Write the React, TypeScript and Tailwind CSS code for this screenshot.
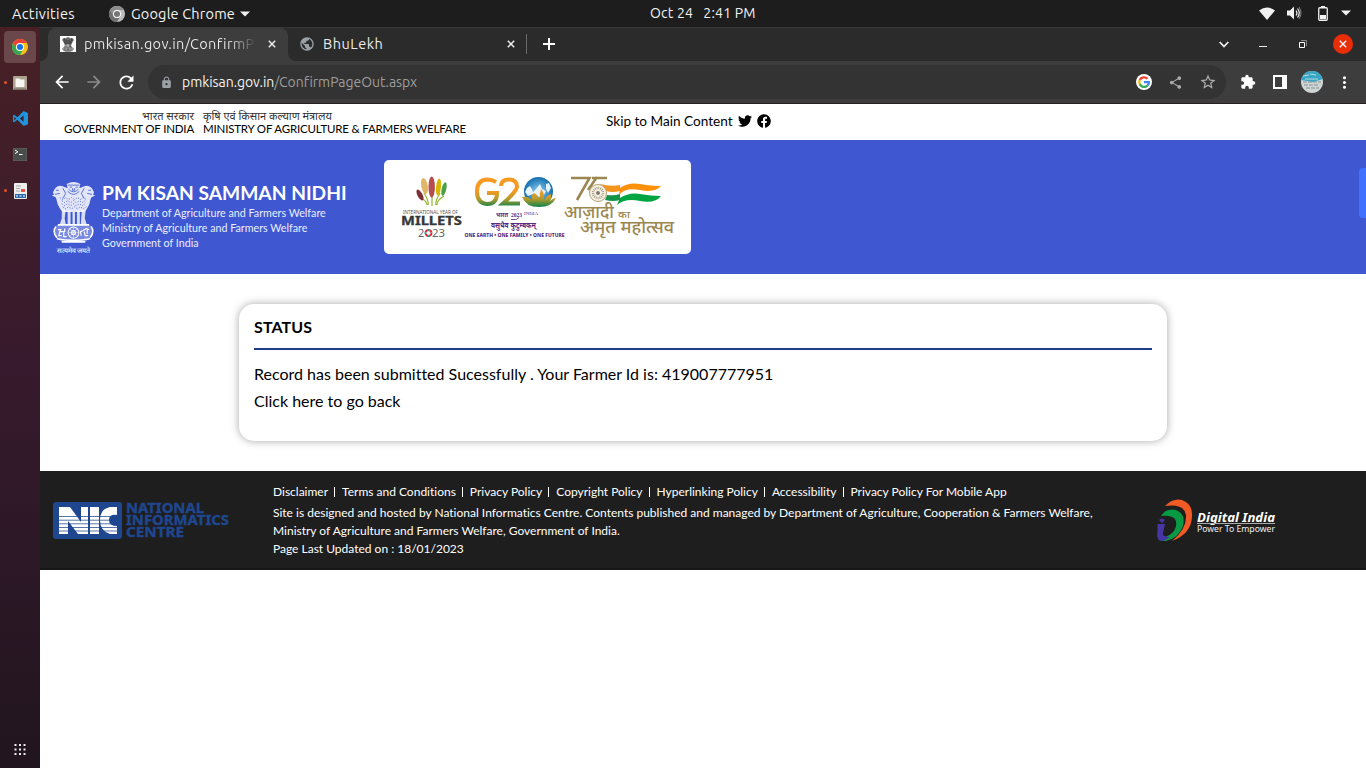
import React from 'react';
import { FaTwitter, FaFacebook } from 'react-icons/fa';
import { MdArrowBack, MdArrowForward, MdRefresh, MdLock, MdShare, MdStarBorder, MdExtension, MdMoreVert, MdPublic } from 'react-icons/md';

function ChromeLogo({ size, gray = false }: { size: number; gray?: boolean }) {
  const c = gray ? ['#8d8d8d', '#bdbdbd', '#6f6f6f', '#777'] : ['#ea4335', '#fbc116', '#34a853', '#1a73e8'];
  return (
    <svg width={size} height={size} viewBox="0 0 48 48" className="shrink-0">
      <circle cx="24" cy="24" r="24" fill={c[1]} />
      <path d="M24 12H44.8A24 24 0 0 0 3.2 12L13.6 30A12 12 0 0 1 24 12Z" fill={c[0]} />
      <path d="M3.2 12A24 24 0 0 0 24 48L34.4 30A12 12 0 0 1 13.6 30Z" fill={c[2]} />
      <circle cx="24" cy="24" r="12" fill="#fff" />
      <circle cx="24" cy="24" r="9.2" fill={c[3]} />
    </svg>
  );
}

function Emblem({ className, color, detail }: { className: string; color: string; detail: string }) {
  return (
    <svg className={className} viewBox="0 0 44 62" preserveAspectRatio="none">
      <g fill={color}>
        <path d="M15 3Q22-1 29 3L28 7 33 5Q40 3 43 11L42 13 44 14 40 16 38 23 35 28 32 30H12L9 28 6 23 4 16 0 14 2 13 1 11Q4 3 11 5L16 7Z" opacity=".85" />
        <path d="M10 28h4l-1 8 1 6H8l2-6zM16 29h3v13h-3zM21 30h2.500v12h-2.500zM25.500 29h3v13h-3zM30.500 28h4l-1 8 2 6h-6z" opacity=".8" />
        <path d="M7 42H37Q42 44 42 49T38 56L34 59H10L6 56Q2 54 2 49T7 42Z" opacity=".3" />
      </g>
      <g fill="none" stroke={detail} strokeWidth=".8">
        <path d="M16 4h12M18 6h2.500M24 6h2.500M21 7v2h2V7M16 10Q22 16 28 10M17 8Q22 13 27 8M4 9h3M37 9h3M3 13l5-1M41 13l-5-1M11 7l3 5-3 5M33 7l-3 5 3 5" />
        <path d="M8 16l3 2 3-2 3 2 3-2 3 2 3-2 3 2 3-2 3 2M10 19l3 2 3-2 3 2 3-2 3 2 3-2 3 2 3-2M10 22l3 2 3-2 3 2 3-2 3 2 3-2 3 2 3-2M11 25l3 2 3-2 3 2 3-2 3 2 3-2 3 2 3-2" strokeDasharray="1.200 1.600" />
      </g>
      <g fill="none" stroke={color} strokeWidth="1">
        <path d="M6 42.500H38M5 56Q22 59 39 56M10 59H34M4 44q-4 5 1 11M40 44q4 5-1 11" strokeWidth="1.600" />
        <circle cx="22" cy="50" r="5.500" /><circle cx="22" cy="50" r="2" />
        <path d="M22 45v10M17 50h10M18.500 46.500l7 7M25.500 46.500l-7 7" strokeWidth=".5" />
        <path d="M6 47h3l-1 2h5v-3M8 49l-1 4h3M12 50v4h3M38 47l-3-1-3 2-3 1 1 4M33 49l1 4h3M36 47v4" strokeWidth="1.200" />
      </g>
    </svg>
  );
}

function TopBar() {
  return (
    <header className="flex h-[27px] shrink-0 items-center bg-[#1d1d1d] text-[14.5px] text-[#f2f2f2]">
      <span className="w-[109px] pl-3 tracking-[0.35px]">Activities</span>
      <ChromeLogo size={16} gray />
      <span className="ml-[6px] w-[109px] whitespace-nowrap tracking-[0.18px]">Google Chrome</span>
      <svg width="10" height="6" viewBox="0 0 10 6"><path d="M0 .5h10L5 5.5z" fill="#f2f2f2" /></svg>
      <span className="mb-px ml-[400px] whitespace-pre text-[14px] tracking-[0.2px]">Oct 24   2:41 PM</span>
      <div className="mb-px ml-auto flex items-center pr-[15px]">
        <svg width="16" height="13" viewBox="0 0 16 13"><path d="M0 3.5Q8-2.5 16 3.5L8 13Z" fill="#f2f2f2" /></svg>
        <svg className="ml-[12px]" width="16" height="14" viewBox="0 0 16 14"><path d="M0 4.500h3L7 .5v13L3 9.500H0z" fill="#f2f2f2" /><path d="M9 4.500q2 2.500 0 5M10.500 2.500q3.500 4.500 0 9" fill="none" stroke="#f2f2f2" strokeWidth="1.200" /><path d="M12 1q4 6 0 12" fill="none" stroke="#888" /></svg>
        <svg className="ml-[15px]" width="10" height="15" viewBox="0 0 10 15"><path d="M3 0h4v2H3z" fill="#f2f2f2" /><rect x=".75" y="1.750" width="8.500" height="12.500" rx="1" fill="none" stroke="#f2f2f2" strokeWidth="1.300" /><path d="M2 9h6v4H2z" fill="#f2f2f2" /></svg>
        <svg className="ml-[13px]" width="10" height="6" viewBox="0 0 10 6"><path d="M0 .5h10L5 5.500z" fill="#f2f2f2" /></svg>
      </div>
    </header>
  );
}

function Dock() {
  const items: { dot: boolean; icon: React.ReactNode }[] = [
    { dot: true, icon: <ChromeLogo size={16} /> },
    { dot: true, icon: <svg width="14" height="14" viewBox="0 0 14 14"><rect width="14" height="14" rx="1" fill="#aaa18f" /><rect x="1" y="12.500" width="12" height="1.500" fill="#7c7567" /><path d="M2.500 2.500h4l1 1h4V10q0 1-1 1h-7q-1 0-1-1Z" fill="#f7f5f1" /></svg> },
    { dot: false, icon: <svg width="15" height="15" viewBox="0 0 24 24"><path d="M17 0l7 3v18l-7 3L7 14l-5 4-2-1V7l2-1 5 4zM17 7l-6 5 6 5zM2 9v6l3-3z" fill="#1f93dc" fillRule="evenodd" /></svg> },
    { dot: false, icon: <svg width="14" height="13" viewBox="0 0 14 13"><rect width="14" height="13" rx="1" fill="#4a4c4c" stroke="#777" strokeWidth=".6" /><path d="M2 2l3 1.800L2 5.600M6 6.500h3.500" fill="none" stroke="#fff" /></svg> },
    { dot: true, icon: <svg width="13" height="16" viewBox="0 0 13 16"><rect width="13" height="16" rx="1" fill="#efeeec" /><path d="M2 3h5M2 5.500h4M2 8h4" stroke="#aaa" strokeWidth="1" /><rect x="7" y="6" width="4" height="3" fill="#e05545" /><rect x="1" y="11" width="11" height="4" fill="#2668a8" /><path d="M2 13h2M5.500 13h2M9 13h2" stroke="#b8d6f2" strokeWidth="1.500" /></svg> },
  ];
  return (
    <aside className="flex w-10 shrink-0 flex-col bg-gradient-to-b from-[#482025] via-[#371a2d] via-45% to-[#21151f] pt-[2px]">
      {items.map((it, i) => (
        <div key={i} className="flex h-9 items-center pb-px">
          <span className="ml-1 flex w-[2px]">{it.dot && <i className="h-[3px] w-[3px] shrink-0 rounded-full bg-[#e9541f]" />}</span>
          <span className={i === 0 ? '-ml-[2px] flex h-8 w-8 items-center justify-center rounded-[4px] bg-[#69474b]' : '-ml-[2px] flex h-8 w-8 items-center justify-center'}>{it.icon}</span>
        </div>
      ))}
      <svg className="mt-auto mb-[13px] ml-[14px]" width="12" height="11" viewBox="0 0 12 11" fill="#ededed">
        {[0, 4.5, 9].map(y => [0, 4.5, 9].map(x => <rect key={`${x}-${y}`} x={x + 0.5} y={y} width="2" height="2" />))}
      </svg>
    </aside>
  );
}

function Close({ className = '' }: { className?: string }) {
  return <svg className={className} width="8" height="8" viewBox="0 0 8 8"><path d="M.8.800l6.400 6.400M7.200.800L.800 7.200" stroke="#eee" strokeWidth="1.500" /></svg>;
}

function Browser() {
  return (
    <div className="shrink-0 border-b border-[#262026] bg-[#3d3d3d] [font-variant-ligatures:none]">
      <div className="flex h-[34px] border-t border-[#383838] bg-[#2b2b2b] text-[14.5px] text-[#eaeaea]">
        <div className="w-2 bg-[#3d3d3d]"><div className="h-full rounded-br-lg bg-[#2b2b2b]" /></div>
        <div className="flex w-[240px] items-center rounded-t-lg bg-[#3d3d3d] pb-px pl-3">
          <span className="flex h-4 w-4 items-center justify-center bg-white"><Emblem className="h-[15px] w-3" color="#222" detail="#ddd" /></span>
          <span className="ml-2 w-[172px] overflow-hidden bg-gradient-to-r from-[#eaeaea] from-84% to-transparent bg-clip-text whitespace-nowrap text-transparent tracking-[0.32px]">pmkisan.gov.in/ConfirmP</span>
          <Close className="ml-3" />
        </div>
        <div className="w-[238px] bg-[#3d3d3d]">
          <div className="flex h-full items-center rounded-bl-lg bg-[#2b2b2b] pb-px pl-[11px]">
            <MdPublic className="text-[#9aa0a6]" size={16} />
            <span className="ml-2 w-[184px] tracking-[0.5px]">BhuLekh</span>
            <Close />
          </div>
        </div>
        <div className="mt-[6px] h-5 w-px bg-[#6a6a6a]" />
        <svg className="mt-[10px] ml-4" width="12" height="12" viewBox="0 0 12 12"><path d="M6 0v12M0 6h12" stroke="#fff" strokeWidth="2" /></svg>
        <div className="ml-auto flex items-center pr-[13px] pb-px">
          <svg width="10" height="7" viewBox="0 0 10 7"><path d="M.7 1L5 5.500 9.300 1" fill="none" stroke="#eee" strokeWidth="1.800" /></svg>
          <svg className="mt-[4px] ml-[30px]" width="8" height="2" viewBox="0 0 8 2"><path d="M0 1.500h8" stroke="#eee" /></svg>
          <svg className="ml-8" width="8" height="8" viewBox="0 0 8 8" fill="none"><path d="M2 .5h5.500V6" stroke="#888" /><path d="M.5 2.500h5v5h-5z" stroke="#fff" /></svg>
          <span className="ml-[26px] flex h-5 w-5 items-center justify-center rounded-full bg-[#e92d07]"><Close /></span>
        </div>
      </div>
      <div className="flex h-[42px] items-center pl-3 text-white">
        <MdArrowBack size={20} className="text-white" />
        <MdArrowForward size={20} className="ml-3 text-[#8b8b8b]" />
        <MdRefresh size={21} className="ml-[12px]" />
        <div className="ml-[11px] flex h-[34px] w-[1078px] items-center rounded-full bg-[#333] pl-[12px]">
          <MdLock size={13} className="text-[#9aa0a6]" />
          <span className="ml-[9px] text-[14px] tracking-[-0.05px] text-[#9d9d9d]"><span className="text-[#f2f2f2]">pmkisan.gov.in</span>/ConfirmPageOut.aspx</span>
          <span className="ml-auto flex h-4 w-4 items-center justify-center rounded-full bg-white">
            <svg width="12" height="12" viewBox="0 0 24 24" fill="none" strokeWidth="4.500"><path d="M19 5.500A9.500 9.500 0 0 0 3.500 8" stroke="#ea4335" /><path d="M3.500 8a9.500 9.500 0 0 0 0 8" stroke="#fbbc05" /><path d="M3.500 16A9.500 9.500 0 0 0 19 19" stroke="#34a853" /><path d="M19 19q3-3 3-7H12" stroke="#4285f4" /></svg>
          </span>
          <MdShare size={15} className="ml-4 text-[#aaa]" />
          <MdStarBorder size={18} className="mr-[9px] ml-[16px] text-[#b0b0b0]" />
        </div>
        <MdExtension size={16} className="ml-[14px]" />
        <svg className="ml-[17px]" width="14" height="14" viewBox="0 0 14 14"><path d="M0 0h14v14H0zM2 2v10h7V2z" fill="#fff" fillRule="evenodd" /></svg>
        <svg className="ml-[14px] rounded-full" width="22" height="22" viewBox="0 0 22 22"><path fill="#cfd4d4" d="M0 0h22v22H0z" /><path d="M0 0h22v8l-10 3-12-2z" fill="#35a6c6" /><path d="M2 5l6-1M9 3l6 1M4 8h13" stroke="#b8d9df" /><path d="M2 11h18M3 14h15M5 17h13" stroke="#879396" strokeWidth="1" strokeDasharray="4 1" /></svg>
        <MdMoreVert size={19} className="ml-[12px]" />
      </div>
    </div>
  );
}

function Millets() {
  return (
    <svg className="ml-4 overflow-visible" width="63" height="66" viewBox="0 0 63 66">
      <g fill="none" strokeWidth="1.200" stroke="#8fb92c"><path d="M24 18Q29 26 28 30M32 15V31M40 18Q35 26 36 30M21 23q6 3 6 7M44 21q-7 4-7 9" /></g>
      <ellipse cx="24.500" cy="11" rx="3.300" ry="8" transform="rotate(-10 24.500 11)" fill="#dfb767" /><ellipse cx="31.700" cy="12" rx="3.200" ry="10.500" fill="#b54f4d" /><ellipse cx="38.500" cy="12" rx="2.500" ry="8.500" transform="rotate(6 38.500 12)" fill="#d6b800" /><ellipse cx="44" cy="14" rx="2.300" ry="7" transform="rotate(13 44 14)" fill="#4c9f45" /><ellipse cx="20" cy="20" rx="2.500" ry="6" transform="rotate(-28 20 20)" fill="#7d3036" />
      <text x="3" y="39" fontFamily="Noto Sans" fontSize="5.500" fill="#555" textLength="55" lengthAdjust="spacingAndGlyphs">INTERNATIONAL YEAR OF</text>
      <text x="1" y="50" fontFamily="Noto Sans" fontWeight="700" fontSize="12" fill="#363738" stroke="#363738" strokeWidth=".3" textLength="61" lengthAdjust="spacingAndGlyphs">MILLETS</text>
      <text x="18" y="62" fontFamily="Noto Sans" fontSize="11" fill="#666">2</text>
      <circle cx="28.500" cy="58" r="3" fill="none" stroke="#e5243b" strokeWidth="2" strokeDasharray="3 2" /><circle cx="28.500" cy="58" r="3" fill="none" stroke="#26967d" strokeWidth="2" strokeDasharray="2 3" strokeDashoffset="-3" />
      <text x="32" y="62" fontFamily="Noto Sans" fontSize="11" fill="#666" textLength="13" lengthAdjust="spacingAndGlyphs">23</text>
    </svg>
  );
}

function G20() {
  return (
    <svg className="ml-px overflow-visible" width="102" height="66" viewBox="0 0 102 66">
      <defs><linearGradient id="g" gradientUnits="userSpaceOnUse" x1="0" y1="3" x2="0" y2="32"><stop offset=".45" stopColor="#f79a22" /><stop offset=".72" stopColor="#b69b2d" /><stop offset="1" stopColor="#09844a" /></linearGradient><radialGradient id="b"><stop stopColor="#8fd0f7" /><stop offset="1" stopColor="#136fae" /></radialGradient></defs>
      <g fill="none" stroke="url(#g)" strokeWidth="4"><path d="M32 7Q28 4.500 23 4.500Q13 5 13 16.500T23 29Q33 29 33 18H23" /><path d="M37 11Q37 4.500 45 4.500T53 12Q52 17 39 28.500H56" /></g>
      <circle cx="74.500" cy="16.500" r="14.500" fill="url(#b)" />
      <path d="M63 13l3-2 2 3 1 3 3-3 4-5 2 5 4 2-2 4-5 2-6-3-5 2-3-4zM82 9l3-1 2 5-3 5-2-4z" fill="#e6f2f8" />
      <path d="M58 22q7-1 10 4-1-6 2-8 4 2 6 7-1-6 1-11 4 5 3 11 3-5 7-6 1 4-1 7 3-3 6-3-4 9-17 9T58 22Z" fill="url(#g)" />
      <text x="32" y="42" fontFamily="Noto Sans, sans-serif" fontWeight="700" fontSize="7" fill="#542b80" textLength="12" lengthAdjust="spacingAndGlyphs">भारत</text>
      <text x="47" y="41.500" fontFamily="Liberation Serif" fontWeight="700" fontSize="6" fill="#542b80" textLength="11" lengthAdjust="spacingAndGlyphs">2023</text>
      <text x="60" y="40" fontFamily="Liberation Serif" fontSize="5" fill="#542b80" textLength="14" lengthAdjust="spacingAndGlyphs">INDIA</text>
      <text x="27" y="53" fontFamily="Noto Sans, sans-serif" fontWeight="700" fontSize="8.500" fill="#542b80" textLength="45" lengthAdjust="spacingAndGlyphs">वसुधैव कुटुम्बकम्</text>
      <path d="M47 44.500q6 1 8-2" stroke="#542b80" fill="none" strokeWidth=".8" />
      <text x="0.500" y="62" fontFamily="Noto Sans" fontWeight="800" fontSize="4.500" fill="#542b80" textLength="100" lengthAdjust="spacingAndGlyphs">ONE EARTH • ONE FAMILY • ONE FUTURE</text>
    </svg>
  );
}

function Azadi() {
  return (
    <svg className="-ml-px overflow-visible" width="112" height="66" viewBox="0 0 112 66">
      <path d="M6 3H24.500L12 25M27 3H42M32 2L23 15" fill="none" stroke="#9b8752" strokeWidth="2.600" />
      <path d="M35 9q11 3 20 1v6q-8 2-14 0z" fill="#f7941e" />
      <path d="M55 13Q63 7 75 9T96 11Q90 18 75 15T54 20Z" fill="#ff9009" />
      <path d="M42 20q7 1 13-1v6q-7 2-15 0z" fill="#159447" /><path d="M55 23Q64 17 75 19T96 21Q90 29 75 26T52 30Z" fill="#00a441" />
      <circle cx="33" cy="18" r="8.500" fill="#f7f2e5" stroke="#b1a276" /><circle cx="33" cy="18" r="5" fill="none" stroke="#9d9678" strokeWidth="2.500" strokeDasharray=".8 1" /><circle cx="33" cy="18" r="2" fill="#7e7c6d" />
      <text x="-1" y="43" fontFamily="Noto Sans, sans-serif" fontWeight="500" fontSize="17" fill="#9b8752" textLength="50" lengthAdjust="spacingAndGlyphs">आज़ादी</text>
      <text x="53" y="43" fontFamily="Noto Sans, sans-serif" fontWeight="500" fontSize="10" fill="#9b8752" textLength="12" lengthAdjust="spacingAndGlyphs">का</text>
      <text x="15" y="57.500" fontFamily="Noto Sans, sans-serif" fontWeight="500" fontSize="17" fill="#9b8752" textLength="94" lengthAdjust="spacingAndGlyphs">अमृत महोत्सव</text>
    </svg>
  );
}

function NicLogo() {
  return (
    <svg className="overflow-visible" width="178" height="38" viewBox="0 0 178 38">
      <rect x="0" y="0" width="69" height="37" rx="3" fill="#1f478f" />
      <path d="M6 5H17L28 20V5H35V32H25L15 19V32H6ZM37 5H46V32H37ZM64 5H57Q47 7 47 18T57 32H64V24Q56 24 56 18T64 13Z" fill="#fff" />
      <path d="M6 14.500H64M6 18.200H64M6 21.800H64M6 25.500H64M6 29H64" stroke="#1f478f" strokeWidth="1" strokeOpacity=".75" />
      <g fontFamily="Noto Sans" fontSize="14.500" fontWeight="700" fill="#1f478f" stroke="#1f478f" strokeWidth=".4"><text x="73" y="11" textLength="78" lengthAdjust="spacingAndGlyphs">NATIONAL</text><text x="73" y="23" textLength="103" lengthAdjust="spacingAndGlyphs">INFORMATICS</text><text x="73" y="35" textLength="58" lengthAdjust="spacingAndGlyphs">CENTRE</text></g>
    </svg>
  );
}

function DigitalIndia() {
  return (
    <svg className="ml-px" width="120" height="43" viewBox="0 0 120 43">
      <path d="M8 7Q16-1 25 1 36 5 35 18 34 35 15 42 30 30 29 16 27 4 8 7Z" fill="#f15a24" />
      <path d="M4 17Q9 9 19 11 29 15 26 27 22 39 9 42 3 42 1 40 17 37 19 27 21 15 4 17Z" fill="#089944" />
      <path d="M.5 25H8L6 34Q5 38 13 38 8 42 4 42-1 41 .5 32ZM2 21q3-3 6 0L5 24Z" fill="#4635a3" />
      <text x="40" y="22.500" fontFamily="Noto Sans" fontSize="13" fontWeight="700" fontStyle="italic" fill="#fff" textLength="78" lengthAdjust="spacingAndGlyphs">Digital India</text>
      <path d="M40 24.500H118" stroke="#aaa" strokeWidth="1" />
      <text x="40" y="33" fontFamily="Noto Sans" fontSize="8.500" fill="#eee" textLength="78" lengthAdjust="spacingAndGlyphs">Power To Empower</text>
    </svg>
  );
}

const links = ['Disclaimer', 'Terms and Conditions', 'Privacy Policy', 'Copyright Policy', 'Hyperlinking Policy', 'Accessibility', 'Privacy Policy For Mobile App'];

function Site() {
  return (
    <main className="flex-1 overflow-hidden bg-white font-['Lato',sans-serif] text-black [font-variant-ligatures:none]">
      <div className="flex h-9 text-[11.5px] leading-[13px] whitespace-nowrap">
        <div className="w-[154px] pt-[5px] text-right"><p className="font-['Lato','Noto_Sans',sans-serif] text-[11px] text-[#333]">भारत सरकार</p><p className="tracking-[-0.18px]">GOVERNMENT OF INDIA</p></div>
        <div className="ml-[9px] w-[403px] pt-[5px]"><p className="font-['Lato','Noto_Sans',sans-serif] text-[11px] text-[#333]">कृषि एवं किसान कल्याण मंत्रालय</p><p className="tracking-[-0.18px]">MINISTRY OF AGRICULTURE &amp; FARMERS WELFARE</p></div>
        <div className="flex items-center pb-[2px] text-[13.6px]"><span className="w-[132px]">Skip to Main Content</span><FaTwitter size={14} /><FaFacebook size={14} className="ml-[5px]" /></div>
      </div>
      <section className="flex h-[134px] bg-[#3f58d1] text-white">
        <div className="flex w-[344px] pl-3">
          <div className="mt-[41px] flex w-[43px] flex-col items-center"><Emblem className="h-[64px] w-[43px]" color="#fff" detail="#3f58d1" /><span className="text-[7px] leading-[10px] whitespace-nowrap">सत्यमेव जयते</span></div>
          <div className="ml-[7px] pt-[41px]"><h1 className="text-[19.2px] leading-[24px] font-bold whitespace-nowrap">PM KISAN SAMMAN NIDHI</h1><p className="text-[10.72px] leading-[15px] text-[#e9edff]">Department of Agriculture and Farmers Welfare<br />Ministry of Agriculture and Farmers Welfare<br />Government of India</p></div>
        </div>
        <div className="mt-5 flex h-[94px] w-[307px] rounded-[5px] bg-white pt-[15px]"><Millets /><G20 /><Azadi /></div>
        <div className="mt-7 ml-auto h-[50px] w-[7px] rounded-l-[4px] bg-[#4070ff]" />
      </section>
      <section className="mt-[30px] ml-[199px] h-[137px] w-[928px] rounded-[15px] bg-white px-[15px] shadow-[0_0_8px_rgba(0,0,0,0.35)]">
        <h2 className="h-[46px] border-b-2 border-[#1e3c87] pt-[11px] text-[16px] leading-[24px] font-bold tracking-[0.1px]">STATUS</h2>
        <p className="mt-[11px] text-[16px] leading-[26px]">Record has been submitted Sucessfully . Your Farmer Id is: 419007777951</p>
        <p className="mt-px text-[16px] leading-[26px]">Click here to go back</p>
      </section>
      <footer className="mt-[30px] flex h-[99px] border-b-2 border-[#171717] bg-[#1e1e1e] text-[12px] leading-[18px] text-white">
        <div className="w-[233px] pt-[31px] pl-[13px]"><NicLogo /></div>
        <div className="w-[883px] pt-[12px] whitespace-nowrap">
          <nav className="flex items-center">{links.map((l, i) => <span key={l} className="flex items-center">{i > 0 && <i className="mr-[7px] ml-[6px] h-[10px] w-px bg-white" />}<a>{l}</a></span>)}</nav>
          <p className="mt-[3px]">Site is designed and hosted by National Informatics Centre. Contents published and managed by Department of Agriculture, Cooperation &amp; Farmers Welfare,</p>
          <p>Ministry of Agriculture and Farmers Welfare, Government of India.</p>
          <p>Page Last Updated on : 18/01/2023</p>
        </div>
        <div className="pt-[28px]"><DigitalIndia /></div>
      </footer>
    </main>
  );
}

export default function App() {
  return (
    <div className="flex h-[768px] w-[1366px] flex-col overflow-hidden bg-[#1d1d1d] font-['Ubuntu','Noto_Sans',sans-serif]">
      <TopBar />
      <div className="flex min-h-0 flex-1"><Dock /><div className="flex w-[1326px] flex-col"><Browser /><Site /></div></div>
    </div>
  );
}
